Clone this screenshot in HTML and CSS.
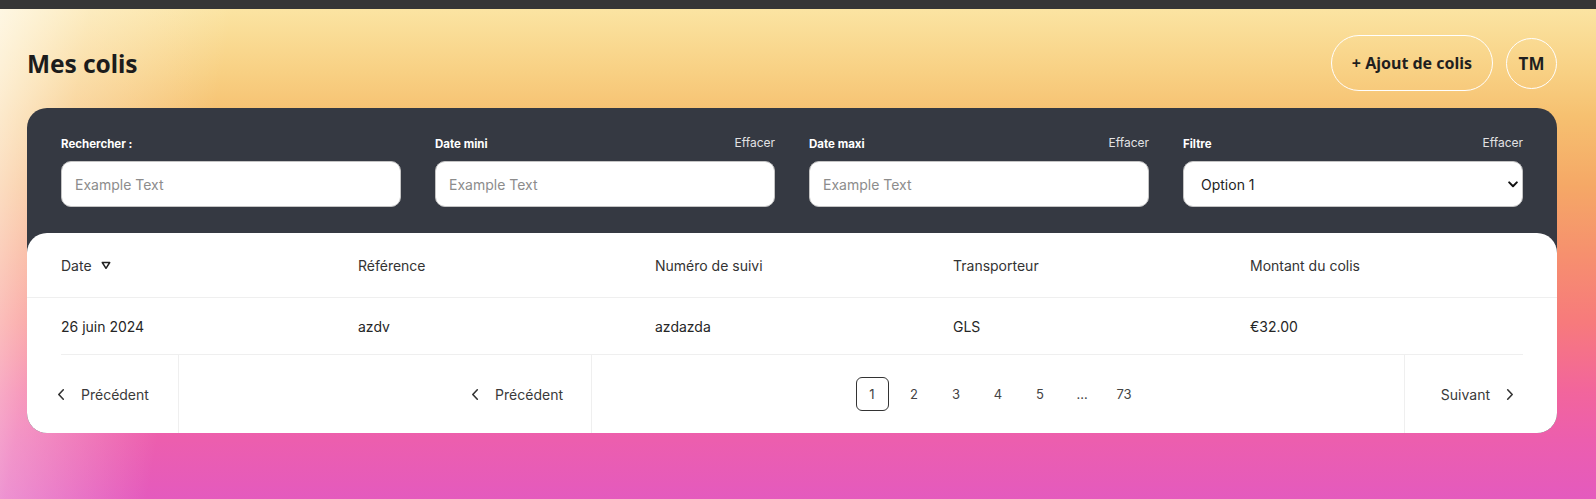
FILE: index.html
```html
<!DOCTYPE html>
<html lang="fr">
<head>
<meta charset="utf-8">
<title>Mes colis</title>
<link rel="stylesheet" href="styles.css">
</head>
<body>
<div class="topbar"></div>
<main class="page">
  <header class="page-head">
    <h1 class="title">Mes colis</h1>
    <div class="actions">
      <button class="pill" type="button">+ Ajout de colis</button>
      <div class="avatar">TM</div>
    </div>
  </header>

  <section class="panel">
    <div class="filters">
      <div class="field">
        <div class="field-head"><label class="label">Rechercher :</label></div>
        <input class="input" type="text" placeholder="Example Text">
      </div>
      <div class="field">
        <div class="field-head"><label class="label">Date mini</label><span class="clear">Effacer</span></div>
        <input class="input" type="text" placeholder="Example Text">
      </div>
      <div class="field">
        <div class="field-head"><label class="label">Date maxi</label><span class="clear">Effacer</span></div>
        <input class="input" type="text" placeholder="Example Text">
      </div>
      <div class="field">
        <div class="field-head"><label class="label">Filtre</label><span class="clear">Effacer</span></div>
        <div class="select-wrap">
          <select class="input select">
            <option>Option 1</option>
            <option>Option 2</option>
          </select>
          <svg class="select-arrow" width="10" height="7" viewBox="0 0 10 7"><path d="M1.2 1.4 L5 5.2 L8.8 1.4" fill="none" stroke="#111" stroke-width="2" stroke-linecap="round" stroke-linejoin="round"/></svg>
        </div>
      </div>
    </div>

    <div class="card">
      <div class="thead grid">
        <div class="th">Date <svg class="sort" width="10" height="9" viewBox="0 0 10 9"><path d="M1.3 1.5 H8.7 L5 7.3 Z" fill="none" stroke="#222" stroke-width="1.5" stroke-linejoin="round"/></svg></div>
        <div class="th">Référence</div>
        <div class="th">Numéro de suivi</div>
        <div class="th">Transporteur</div>
        <div class="th">Montant du colis</div>
      </div>
      <div class="trow grid">
        <div class="td">26 juin 2024</div>
        <div class="td">azdv</div>
        <div class="td">azdazda</div>
        <div class="td">GLS</div>
        <div class="td">€32.00</div>
      </div>
      <nav class="pager">
        <div class="pg-sec pg-mobile">
          <svg class="chev" width="8" height="13" viewBox="0 0 8 13"><path d="M6.3 1.8 L1.8 6.5 L6.3 11.2" fill="none" stroke="#333" stroke-width="1.6" stroke-linecap="round" stroke-linejoin="round"/></svg>
          <span>Précédent</span>
        </div>
        <div class="pg-sec pg-prev">
          <svg class="chev" width="8" height="13" viewBox="0 0 8 13"><path d="M6.3 1.8 L1.8 6.5 L6.3 11.2" fill="none" stroke="#333" stroke-width="1.6" stroke-linecap="round" stroke-linejoin="round"/></svg>
          <span>Précédent</span>
        </div>
        <div class="pg-sec pg-pages">
          <span class="pg-num active">1</span>
          <span class="pg-num">2</span>
          <span class="pg-num">3</span>
          <span class="pg-num">4</span>
          <span class="pg-num">5</span>
          <span class="pg-num">…</span>
          <span class="pg-num">73</span>
        </div>
        <div class="pg-sec pg-next">
          <span>Suivant</span>
          <svg class="chev" width="8" height="13" viewBox="0 0 8 13"><path d="M1.7 1.8 L6.2 6.5 L1.7 11.2" fill="none" stroke="#333" stroke-width="1.6" stroke-linecap="round" stroke-linejoin="round"/></svg>
        </div>
      </nav>
    </div>
  </section>
</main>
</body>
</html>
```

FILE: styles.css
```css
* { box-sizing: border-box; }

html, body {
  margin: 0;
  padding: 0;
}

body {
  font-family: Inter, "Noto Sans", "Liberation Sans", sans-serif;
  color: #2b2b2b;
  background: #e65abd;
  min-height: 499px;
}

.topbar {
  height: 9px;
  background: #363636;
}

.page {
  min-height: 490px;
  padding: 0 39px 40px 27px;
  background:
    linear-gradient(100deg, rgba(255, 252, 245, 0.78) 0px, rgba(255, 250, 245, 0.35) 90px, rgba(255, 255, 255, 0) 230px),
    linear-gradient(to bottom, #fbe4a2 0%, #f8d083 13%, #f6c070 22%, #f5a866 36%, #f6906e 50%, #f77a7c 64%, #f2659c 78%, #ec5eae 88%, #e45abe 100%);
}

.page-head {
  height: 99px;
  padding-top: 9px;
  display: flex;
  align-items: center;
  justify-content: space-between;
}

.title {
  margin: 0;
  font-family: "Noto Sans", "Open Sans", sans-serif;
  font-weight: 700;
  font-size: 24.5px;
  color: #1c1c1c;
  letter-spacing: -0.1px;
}

.actions {
  display: flex;
  align-items: center;
  gap: 13px;
}

.pill {
  height: 56px;
  width: 162px;
  border: 1px solid #ffffff;
  border-radius: 28px;
  background: transparent;
  font-family: "Noto Sans", "Open Sans", sans-serif;
  font-weight: 700;
  font-size: 16px;
  color: #1f1f1f;
  padding: 0;
  cursor: pointer;
}

.avatar {
  width: 51px;
  height: 51px;
  border: 1px solid #ffffff;
  border-radius: 50%;
  display: flex;
  align-items: center;
  justify-content: center;
  font-family: "Noto Sans", "Open Sans", sans-serif;
  font-weight: 700;
  font-size: 17px;
  color: #1f1f1f;
}

.panel {
  background: #353942;
  border-radius: 20px;
  overflow: hidden;
}

.filters {
  display: grid;
  grid-template-columns: repeat(4, 1fr);
  column-gap: 34px;
  padding: 28px 34px 26px;
}

.field-head {
  height: 16px;
  margin-bottom: 9px;
  display: flex;
  justify-content: space-between;
  align-items: baseline;
}

.label {
  font-weight: 700;
  font-size: 11.5px;
  color: #ffffff;
  line-height: 16px;
}

.clear {
  font-size: 12px;
  color: #e2e2e4;
  line-height: 16px;
  position: relative;
  top: -1px;
}

.input {
  display: block;
  width: 100%;
  height: 46px;
  border: 1px solid #c4c4c4;
  border-radius: 10px;
  background: #ffffff;
  padding: 0 13px;
  font-family: inherit;
  font-size: 14px;
  color: #222;
  outline: none;
}

.input::placeholder {
  color: #8c8c8c;
}

.select-wrap {
  position: relative;
}

.select {
  appearance: none;
  -webkit-appearance: none;
  padding-left: 17px;
  color: #1e1e1e;
}

.select-arrow {
  position: absolute;
  right: 5px;
  top: 20px;
  pointer-events: none;
}

.card {
  background: #ffffff;
  border-radius: 20px 20px 0 0;
}

.grid {
  display: grid;
  grid-template-columns: 297px 297px 298px 297px 1fr;
  align-items: center;
}

.thead {
  height: 65px;
  padding: 0 34px;
  border-bottom: 1px solid #efefef;
  font-size: 14px;
  color: #333;
}

.th {
  display: flex;
  align-items: center;
  gap: 9px;
}

.sort {
  margin-top: 1px;
}

.trow {
  height: 57px;
  margin: 0 34px;
  border-bottom: 1px solid #efefef;
  font-size: 14px;
  color: #262626;
}

.pager {
  display: flex;
  height: 78px;
  font-size: 14px;
  color: #3a3a3a;
}

.pg-sec {
  display: flex;
  align-items: center;
}

.pg-mobile {
  width: 152px;
  padding-left: 30px;
  gap: 16px;
  border-right: 1px solid #efefef;
}

.pg-prev {
  width: 413px;
  justify-content: flex-end;
  padding-right: 28px;
  gap: 16px;
  border-right: 1px solid #efefef;
}

.pg-pages {
  flex: 1;
  justify-content: center;
  gap: 9px;
}

.pg-num {
  width: 33px;
  height: 34px;
  display: flex;
  align-items: center;
  justify-content: center;
  font-size: 13px;
  color: #444;
  border: 1px solid transparent;
  border-radius: 6px;
}

.pg-num.active {
  border-color: #333;
}

.pg-next {
  width: 153px;
  justify-content: flex-end;
  padding-right: 43px;
  gap: 16px;
  border-left: 1px solid #efefef;
}

.chev {
  display: block;
  flex: none;
}
```
